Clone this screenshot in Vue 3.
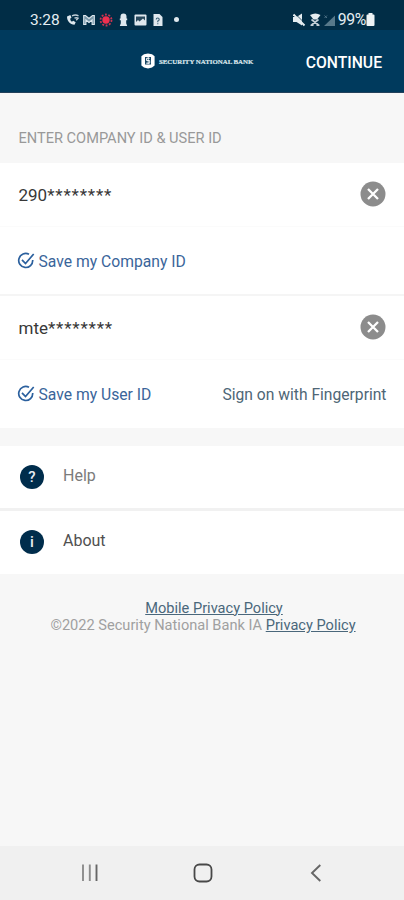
<script setup>
const fields = [
  { value: '290', mask: '********', save: 'Save my Company ID', extra: '' },
  { value: 'mte', mask: '********', save: 'Save my User ID', extra: 'Sign on with Fingerprint' },
]
const links = [
  { glyph: '?', label: 'Help', tone: 'soft' },
  { glyph: 'i', label: 'About', tone: 'strong' },
]
</script>

<template>
  <div class="screen">
    <div class="status">
      <span class="clock">3:28</span>
      <svg class="status-left" width="118" height="16" viewBox="0 0 118 16" fill="#dfe8ee">
        <path d="M0 4.500c0 4.500 3 8 7.500 8.200l1.200-2.500-2.500-1.400-1.300 1C3.800 9 3.200 8 3.200 6.800l1.300-1.200L3.300 3z" />
        <path d="M5 3.800q3.500-1.500 6.500 0M7.500 6.200q2-.8 3.500 0l-1.800 2" fill="none" stroke="#c3d0d8" stroke-width="1.400" />
        <path d="M16.700 12.500v-9h1.800l3.500 3 3.500-3h1.800v9h-2.200V8L22 10.500 18.900 8v4.500z" fill="#7897a8" stroke="#dfe8ee" stroke-width="1.100" />
        <circle cx="39" cy="8" r="3.700" fill="#ef304f" />
        <circle cx="39" cy="8" r="5.500" fill="none" stroke="#c93450" stroke-width="1.800" stroke-dasharray="1.900 1.556" />
        <path d="M53.500 4.500a3 3 0 0 1 6 0v2h.7v1.700h-1v3l1 2.800h-7.400l1-2.800v-3h-1V6.500h.7z" />
        <rect x="67.500" y="2.500" width="12" height="11" rx="1" />
        <path d="M69 4.500h9v4l-2-2-3.500 3L71 8l-2 2z" fill="#28485c" />
        <path d="M86.500 2h6l3 3v9h-9z" />
        <path d="M89.200 7.500q0-1.500 1.500-1.500t1.500 1.400q0 1-1.400 1.700v1.100M90.800 11.200v1.100" fill="none" stroke="#375c72" stroke-width="1.100" />
        <circle cx="109.500" cy="7.500" r="2.500" />
      </svg>
      <svg class="status-right" width="44" height="16" viewBox="0 0 44 16" fill="#e5edf1">
        <path d="M0 5h3.500L9 1.500v12L3.500 10H0z" />
        <path d="M.5 2.500l11 11" stroke="#e5edf1" stroke-width="1.900" />
        <path d="M3.500 3l8.500 8.500" stroke="#12364a" stroke-width=".8" />
        <path d="M17 3q5.500-3 10.500 0L24 7.500h-3.500z" />
        <path d="M18.500 7.500l7 5.500M25.500 7.500l-7 5.500M17.500 13.300h3M23.500 13.300h3" stroke="#c5d1d9" stroke-width="1.600" />
        <path d="M42 3.500V14H31z" fill="#58798a" />
        <path d="M31.500 3.500L34 6m0-2.500L31.500 6" stroke="#54778b" stroke-width=".9" />
      </svg>
      <span class="percent">99%</span>
      <svg width="9" height="13" viewBox="0 0 9 13" fill="#eef3f5">
        <path d="M2.500 0h4v1.500h1q1 0 1 1V12q0 1-1 1h-6q-1 0-1-1V2.500q0-1 1-1h1z" />
      </svg>
    </div>

    <header class="header">
      <div class="brand">
        <svg width="14" height="16" viewBox="0 0 14 16">
          <path d="M3 1.200L7 .4l4 .8 2.600 2v9.200L11 14.600l-4 1-4-1-2.600-2.200V3.200z" fill="#fff" />
          <path d="M4 4h6v7.500H4z" fill="#174765" />
          <path d="M8.700 5.300H5.500v2.200h3.200v2.700H5.200M7.200 4v7" fill="none" stroke="#fff" stroke-width=".9" />
        </svg>
        <span class="brand-name">SECURITY NATIONAL BANK</span>
      </div>
      <span class="continue">CONTINUE</span>
    </header>

    <div class="caption"><span>ENTER COMPANY ID &amp; USER ID</span></div>

    <section v-for="field in fields" :key="field.save" class="field">
      <div class="entry">
        <span class="value">{{ field.value }}<span class="mask">{{ field.mask }}</span></span>
        <svg width="26" height="26" viewBox="0 0 26 26">
          <circle cx="13" cy="13" r="12.500" fill="#8c8c8c" />
          <path d="M8 8l10 10m0-10L8 18" stroke="#fff" stroke-width="2.300" />
        </svg>
      </div>
      <div class="options">
        <svg width="18" height="18" viewBox="0 0 18 18" fill="none" stroke="#2b609e" stroke-width="1.700">
          <path d="M12 2.300A7 7 0 1 0 15.700 8" />
          <path d="M5 7.800l3.500 3.700L16.700 2" />
        </svg>
        <span class="save">{{ field.save }}</span>
        <span v-if="field.extra" class="fingerprint">{{ field.extra }}</span>
      </div>
    </section>

    <nav class="links">
      <div v-for="link in links" :key="link.label" class="link">
        <span class="disc">{{ link.glyph }}</span>
        <span class="link-label" :class="link.tone">{{ link.label }}</span>
      </div>
    </nav>

    <footer class="legal">
      <div class="legal-top"><u>Mobile Privacy Policy</u></div>
      <div class="legal-bottom">©2022 Security National Bank IA <u>Privacy Policy</u></div>
    </footer>

    <div class="system-nav">
      <svg width="18" height="18" viewBox="0 0 18 18" fill="none" stroke-width="1.900">
        <path d="M2 .5v16.500M8.800 .5v16.500" stroke="#8c8c8c" />
        <path d="M15.500 .5v16.500" stroke="#666" />
      </svg>
      <svg class="home" width="20" height="20" viewBox="0 0 20 20" fill="none" stroke="#484848" stroke-width="1.800">
        <rect x="1.500" y="1.500" width="17" height="17" rx="5" />
      </svg>
      <svg width="12" height="18" viewBox="0 0 12 18" fill="none" stroke="#666" stroke-width="1.900">
        <path d="M10.300 1L2 9l8.300 8" />
      </svg>
    </div>
  </div>
</template>

<style>
body {
  margin: 0;
}
</style>

<style scoped>
.screen {
  display: flex;
  flex-direction: column;
  width: 404px;
  height: 900px;
  overflow: hidden;
  background: #f7f7f7;
  font-family: Roboto, "Liberation Sans", sans-serif;
  white-space: nowrap;
}
svg {
  display: block;
  flex: none;
}
.status {
  display: flex;
  align-items: center;
  box-sizing: border-box;
  height: 30px;
  padding: 9px 29px 0 30px;
  background: #012d46;
  color: #e5edf2;
}
.clock {
  width: 37px;
  font-size: 15.500px;
  letter-spacing: -0.100px;
}
.status-right {
  margin-left: auto;
}
.percent {
  margin: 0 0 0 1px;
  font-size: 15.800px;
  letter-spacing: -0.400px;
}
.header {
  display: flex;
  align-items: center;
  justify-content: space-between;
  box-sizing: border-box;
  height: 63px;
  padding: 0 22px 0 141px;
  border-bottom: 1px solid #23415b;
  background: #003a5d;
  color: #fff;
}
.brand {
  display: flex;
  align-items: center;
  gap: 4px;
}
.brand-name {
  font: bold 6.850px "Liberation Serif", serif;
  color: #dce6ec;
  -webkit-text-stroke: 0.200px #dce6ec;
}
.continue {
  padding-top: 2px;
  font-size: 15.700px;
  font-weight: 500;
}
.caption {
  box-sizing: border-box;
  height: 70px;
  padding: 37px 18.500px 0;
  color: #999;
  font-size: 14.600px;
  line-height: 17px;
}
.field {
  box-sizing: border-box;
  height: 133px;
  background: #fff;
  border-bottom: 2px solid #f5f5f5;
}
.field + .field {
  height: 132px;
  border-bottom: 0;
}
.entry {
  display: flex;
  align-items: center;
  justify-content: space-between;
  box-sizing: border-box;
  height: 64px;
  padding: 0 18px 2px 18.500px;
  border-bottom: 1px solid #fbfbfb;
}
.value {
  padding-top: 2px;
  color: #383838;
  font-size: 17px;
}
.mask {
  letter-spacing: 0.800px;
}
.options {
  display: flex;
  align-items: center;
  box-sizing: border-box;
  height: 68px;
  padding: 0 17.500px 0 17px;
  gap: 3.500px;
  color: #3a659a;
  font-size: 15.700px;
}
.fingerprint {
  margin-left: auto;
  color: #4e6676;
  font-size: 15.650px;
}
.links {
  margin-top: 18px;
}
.link {
  display: flex;
  align-items: center;
  box-sizing: border-box;
  height: 63px;
  padding: 0 20px 2px;
  gap: 19px;
  background: #fff;
}
.link:first-child {
  height: 65px;
  padding-bottom: 0;
  border-bottom: 3px solid #f1f1f1;
}
.disc {
  box-sizing: border-box;
  width: 24px;
  height: 24px;
  border-radius: 50%;
  background: #002d4c;
  color: #e8eef3;
  font-size: 15px;
  font-weight: 500;
  line-height: 24px;
  text-align: center;
}
.link-label {
  padding-bottom: 3px;
  font-size: 16px;
}
.soft {
  color: #7b7b7b;
}
.strong {
  color: #505050;
}
.legal {
  padding-top: 25.500px;
  color: #a0a0a0;
  font-size: 14.600px;
  line-height: 17.500px;
  text-align: center;
}
.legal-top {
  padding-left: 24px;
}
.legal-bottom {
  padding-left: 2px;
}
u {
  color: #4a677b;
}
.system-nav {
  display: flex;
  align-items: center;
  justify-content: space-between;
  box-sizing: border-box;
  height: 54px;
  margin-top: auto;
  padding: 0 82px 1px 81px;
  background: #f0f0f0;
}
.home {
  margin-right: 3px;
}
</style>
